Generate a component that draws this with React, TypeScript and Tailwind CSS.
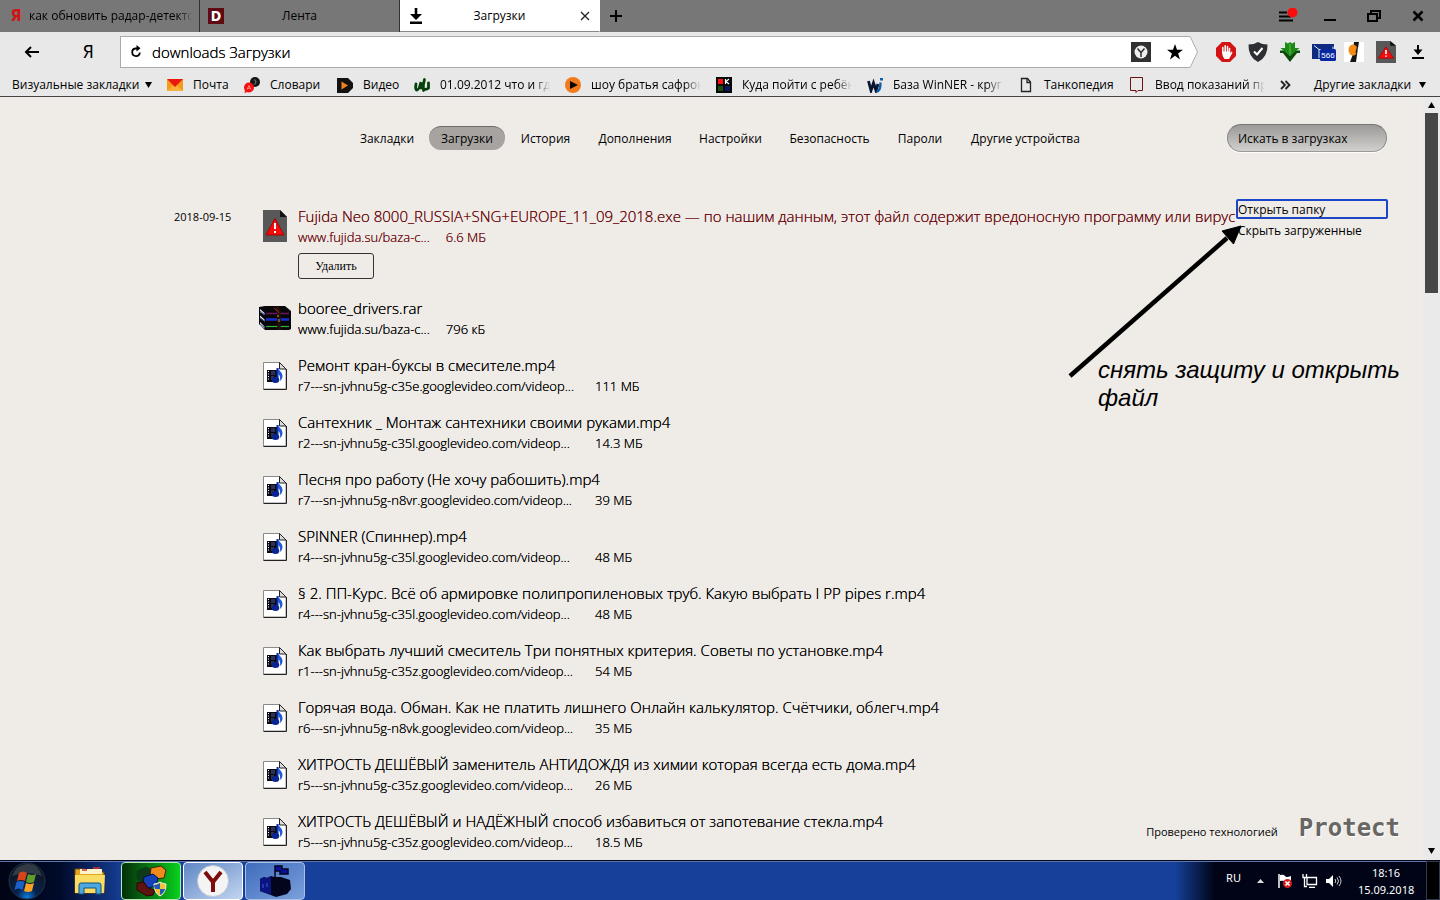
import type { ReactNode } from 'react'

interface Download {
  title: string
  source: string
  size: string
}

const videos: Download[] = [
  { title: 'Ремонт кран-буксы в смесителе.mp4', source: 'r7---sn-jvhnu5g-c35e.googlevideo.com/videop...', size: '111 МБ' },
  { title: 'Сантехник _ Монтаж сантехники своими руками.mp4', source: 'r2---sn-jvhnu5g-c35l.googlevideo.com/videop...', size: '14.3 МБ' },
  { title: 'Песня про работу (Не хочу рабошить).mp4', source: 'r7---sn-jvhnu5g-n8vr.googlevideo.com/videop...', size: '39 МБ' },
  { title: 'SPINNER (Спиннер).mp4', source: 'r4---sn-jvhnu5g-c35l.googlevideo.com/videop...', size: '48 МБ' },
  { title: '§ 2. ПП-Курс. Всё об армировке полипропиленовых труб. Какую выбрать I PP pipes r.mp4', source: 'r4---sn-jvhnu5g-c35l.googlevideo.com/videop...', size: '48 МБ' },
  { title: 'Как выбрать лучший смеситель Три понятных критерия. Советы по установке.mp4', source: 'r1---sn-jvhnu5g-c35z.googlevideo.com/videop...', size: '54 МБ' },
  { title: 'Горячая вода. Обман. Как не платить лишнего Онлайн калькулятор. Счётчики, облегч.mp4', source: 'r6---sn-jvhnu5g-n8vk.googlevideo.com/videop...', size: '35 МБ' },
  { title: 'ХИТРОСТЬ ДЕШЁВЫЙ заменитель АНТИДОЖДЯ из химии которая всегда есть дома.mp4', source: 'r5---sn-jvhnu5g-c35z.googlevideo.com/videop...', size: '26 МБ' },
  { title: 'ХИТРОСТЬ ДЕШЁВЫЙ и НАДЁЖНЫЙ способ избавиться от запотевание стекла.mp4', source: 'r5---sn-jvhnu5g-c35z.googlevideo.com/videop...', size: '18.5 МБ' },
]

const sections = [
  { label: 'Закладки', width: 'w-[78px]' },
  { label: 'Загрузки', width: 'w-[76px]' },
  { label: 'История', width: 'w-[75px]' },
  { label: 'Дополнения', width: 'w-[98px]' },
  { label: 'Настройки', width: 'w-[87px]' },
  { label: 'Безопасность', width: 'w-[105px]' },
  { label: 'Пароли', width: 'w-[70px]' },
  { label: 'Другие устройства', width: 'w-[135px]' },
]

/* ---------- icons ---------- */

function WarningFile({ className }: { className: string }) {
  return (
    <svg viewBox="0 0 24 32" preserveAspectRatio="none" className={className}>
      <path d="M0 0h17l7 7v25H0z" fill="#585858" />
      <path d="M17 0l7 7h-7z" fill="#111" />
      <path d="M12 8.500l9 16.500H3z" fill="#f30c0c" stroke="#a00" strokeLinejoin="round" />
      <path d="M11 13h2v6h-2zM11 21h2v2h-2z" fill="#fff" />
    </svg>
  )
}

function VideoFile() {
  return (
    <svg viewBox="0 0 24 28" className="mt-0.5 h-7 w-6">
      <path d="M.5.500h16l6.500 6.500v20H.5z" fill="#fff" stroke="#8a8a8a" />
      <path d="M.5 27.500h23V7" fill="none" stroke="#222" />
      <path d="M16.500.500V7H23z" fill="#ddd" stroke="#222" />
      <rect x="4" y="8" width="11" height="12" fill="#0a0a12" />
      <path d="M5.500 9v10" stroke="#fff" strokeDasharray="1 1.500" />
      <path d="M8 10h4M8 12h4M8 15h3M8 17h3" stroke="#39406e" strokeWidth="1.500" />
      <path d="M14.500 6v12" stroke="#0b2fa8" strokeWidth="2" />
      <path d="M15 6c1 3 4.500 4 4.500 8 0 2-1 4-2.500 5 .5-3 0-6-2-7z" fill="#2358d8" />
      <ellipse cx="12.500" cy="18" rx="3.800" ry="3" fill="#0b2590" />
    </svg>
  )
}

function Archive() {
  return (
    <svg viewBox="0 0 32 26" className="h-[26px] w-8">
      <path d="M0 2l6-1h20l6 5v18l-2 1H6L0 19z" fill="#080608" />
      <path d="M1 4l4.500 4v2L1 7zM1 10.500l4.500 4v2L1 13zM1 17l4.500 4.500v2L1 20z" fill="#eef4fb" />
      <path d="M1 6l5 4M1 12.500l5 4M1 19l5 4" stroke="#2a4a90" />
      <path d="M7 8.500h23" stroke="#6c1460" strokeWidth="1.500" />
      <path d="M7 14.500h23" stroke="#1430d0" strokeWidth="2.500" />
      <path d="M7 21.500h23" stroke="#27b53c" strokeWidth="1.200" />
      <path d="M17 2l3 4v19" fill="none" stroke="#241008" strokeWidth="3.500" />
      <path d="M19 10v2M20 14v3" fill="none" stroke="#c9a23a" />
      <path d="M15 3l3 3M18 5l2 3" stroke="#a02418" />
    </svg>
  )
}

function MailIcon() {
  return (
    <svg viewBox="0 0 16 16" className="size-4">
      <path d="M0 2h16v12H0z" fill="#f79a1c" />
      <path d="M0 14l8-7 8 7z" fill="#fbb03b" />
      <path d="M0 2h16l-8 8z" fill="#e8190c" />
    </svg>
  )
}

function DictIcon() {
  return (
    <svg viewBox="0 0 16 16" className="size-4">
      <circle cx="11" cy="5" r="5" fill="#151515" />
      <path d="M9.500 3h2v4h-2M11.500 5h1.500" fill="none" stroke="#777" strokeWidth=".8" />
      <circle cx="5" cy="10.500" r="5" fill="#f4100f" />
      <path d="M1 13l-.5 3 3-1z" fill="#f4100f" />
      <path d="M3 12.500L5 8.500l2 4M3.700 11.300h2.600" fill="none" stroke="#ff9c9c" strokeWidth=".8" />
    </svg>
  )
}

function VideoIcon() {
  return (
    <svg viewBox="0 0 16 16" className="size-4">
      <path d="M0 1h11l5 5v5l-5 5H0z" fill="#121212" />
      <path d="M4.500 4.500l6.500 4-6.500 4z" fill="#f5811f" />
    </svg>
  )
}

function LeafIcon() {
  return (
    <svg viewBox="0 0 16 16" className="size-4">
      <path
        d="M2 7q-1 6 1 6t4-8q-1 5 0 6M10.500 2.500q-2 6-1 11M14.500 6v5q-2 2-5 1"
        fill="none"
        stroke="#06400b"
        strokeWidth="2.800"
        strokeLinecap="round"
      />
    </svg>
  )
}

function PlayIcon() {
  return (
    <svg viewBox="0 0 16 16" className="size-4">
      <circle cx="8" cy="8" r="8" fill="#f37a1b" />
      <path d="M5 4l8 4-8 4z" fill="#080808" />
    </svg>
  )
}

function KidsIcon() {
  return (
    <svg viewBox="0 0 16 16" className="size-4">
      <path d="M0 0h16v16H0z" fill="#080808" />
      <path d="M2 2h5v5H2z" fill="#f11" />
      <path d="M2 9h5v5H2z" fill="#145214" />
      <path d="M9 9h5v5H9z" fill="#0b1560" />
      <path d="M9.500 2v5M13 2l-3 2.500L13 7" fill="none" stroke="#fff" strokeWidth="1.200" />
    </svg>
  )
}

function WinnerIcon() {
  return (
    <svg viewBox="0 0 16 16" className="size-4">
      <path d="M1.500 4l2.500 9.500L6.500 6 9 13.500 11 7" fill="none" stroke="#08152f" strokeWidth="2.800" />
      <path d="M9.500 14.500q4 0 4-9" fill="none" stroke="#0d5fa8" strokeWidth="2.400" />
      <path d="M13 1h3v2.500h-3z" fill="#0d5fa8" />
    </svg>
  )
}

function PageIcon() {
  return (
    <svg viewBox="0 0 16 16" className="size-4">
      <path d="M3.500 1.500h6l3 3.500v9.500h-9z" fill="none" stroke="#222" strokeWidth="1.300" />
      <path d="M9 1.500V5.500h3.500" fill="none" stroke="#222" strokeWidth="1.300" />
    </svg>
  )
}

function BalloonIcon() {
  return (
    <svg viewBox="0 0 16 16" className="size-4">
      <path d="M1.500.500h12v13H9l-2 2v-2H1.500z" fill="none" stroke="#6d1212" />
    </svg>
  )
}

function Caret({ className = 'fill-black' }: { className?: string }) {
  return (
    <svg viewBox="0 0 7 6" className={`h-1.5 w-[7px] shrink-0 ${className}`}>
      <path d="M0 0h7L3.500 6z" />
    </svg>
  )
}

/* ---------- browser chrome ---------- */

function Tab({ icon, title, long, active }: { icon: ReactNode; title: string; long?: boolean; active?: boolean }) {
  return (
    <div
      className={`flex w-[200px] items-center border-r pl-2 ${
        active ? 'border-white border-b border-b-[#888] bg-white' : 'border-r-[#333]'
      } ${long ? 'pr-1.5' : 'pr-1'}`}
    >
      <span className={long ? 'w-[21px] shrink-0' : 'w-4 shrink-0'}>{icon}</span>
      <button
        type="button"
        className={`flex-1 overflow-hidden whitespace-nowrap ${
          long ? 'text-left [mask-image:linear-gradient(to_right,#000_90%,transparent)]' : 'text-center'
        }`}
      >
        {title}
      </button>
      {!long && (
        <button type="button" aria-label="Закрыть вкладку" className="flex w-5 justify-center">
          {active && (
            <svg viewBox="0 0 10 10" className="size-2.5">
              <path d="M1 1l8 8M9 1L1 9" stroke="#222" strokeWidth="1.300" />
            </svg>
          )}
        </button>
      )}
    </div>
  )
}

function TabBar() {
  return (
    <div className="flex h-8 bg-[#777]">
      <Tab
        long
        title="как обновить радар-детектор"
        icon={
          <span className="block w-4 text-center font-['DejaVu_Sans_Condensed','DejaVu_Sans'] text-base leading-5 font-bold text-[#d11313]">
            Я
          </span>
        }
      />
      <Tab
        title="Лента"
        icon={
          <span className="block size-4 bg-[#5f0a12] text-center font-['DejaVu_Sans_Condensed','DejaVu_Sans'] text-sm leading-4 font-bold text-white">
            D
          </span>
        }
      />
      <Tab
        active
        title="Загрузки"
        icon={
          <svg viewBox="0 0 16 16" className="size-4">
            <path d="M6.700 0h2.600v6H14l-6 6-6-6h4.700zM2 13.500h12V16H2z" />
          </svg>
        }
      />
      <button type="button" aria-label="Новая вкладка" className="flex w-8 items-center justify-center">
        <svg viewBox="0 0 12 12" className="size-3">
          <path d="M6 0v12M0 6h12" stroke="#000" strokeWidth="2" />
        </svg>
      </button>
      <div className="ml-auto flex">
        <button type="button" aria-label="Меню" className="flex w-11 items-center justify-center">
          <svg viewBox="0 0 20 16" className="ml-1 h-4 w-5">
            <path d="M1 4.500h8M1 8.500h12M1 12.500h14" stroke="#000" strokeWidth="1.800" />
            <circle cx="14.500" cy="4.500" r="5" fill="#fb0d0d" />
          </svg>
        </button>
        <button type="button" aria-label="Свернуть" className="flex w-11 items-center justify-center">
          <svg viewBox="0 0 12 12" className="size-3">
            <path d="M0 10h12" stroke="#000" strokeWidth="2" />
          </svg>
        </button>
        <button type="button" aria-label="Развернуть" className="flex w-11 items-center justify-center">
          <svg viewBox="0 0 14 12" className="h-3 w-3.5">
            <path d="M1 4h9v7H1zM4 4V1h9v7h-3" fill="none" stroke="#000" strokeWidth="2" />
          </svg>
        </button>
        <button type="button" aria-label="Закрыть" className="flex w-11 items-center justify-center">
          <svg viewBox="0 0 12 12" className="size-3">
            <path d="M1.500 1.500l9 9M10.500 1.500l-9 9" stroke="#000" strokeWidth="2.500" />
          </svg>
        </button>
      </div>
    </div>
  )
}

function ExtButton({ label, children }: { label: string; children: ReactNode }) {
  return (
    <button type="button" aria-label={label} className="flex w-8 items-center justify-center">
      {children}
    </button>
  )
}

function Toolbar() {
  return (
    <div className="flex h-10 items-stretch pr-1.5">
      <button type="button" aria-label="Назад" className="flex w-16 items-center justify-center">
        <svg viewBox="0 0 16 12" className="h-3 w-4">
          <path d="M15 6H2M7 1L2 6l5 5" fill="none" stroke="#000" strokeWidth="2" />
        </svg>
      </button>
      <button type="button" className="w-14 pr-2 text-center font-['DejaVu_Sans_Condensed','DejaVu_Sans'] text-lg">
        Я
      </button>
      <div className="my-1 flex flex-1 items-center border-y border-l border-[#aaa] bg-white pl-2">
        <button type="button" aria-label="Обновить">
          <svg viewBox="0 0 14 14" className="size-3.5">
            <path d="M8 3.500H6.500a3.800 3.800 0 1 0 4.300 4" fill="none" stroke="#000" strokeWidth="1.800" />
            <path d="M7.500 0l4 3.200-4 3.300z" />
          </svg>
        </button>
        <input
          aria-label="Адрес"
          defaultValue="downloads Загрузки"
          className="ml-[9px] min-w-0 flex-1 text-[15px] leading-5 font-light outline-none [text-shadow:0_0_0_currentColor]"
        />
        <button type="button" aria-label="Yandex" className="flex size-5 items-center justify-center bg-[#303030]">
          <svg viewBox="0 0 14 14" className="size-3.5">
            <circle cx="7" cy="7" r="6.500" fill="#eee" />
            <path d="M3.500 3.500L7 7.500l3.500-4M7 7v5" fill="none" stroke="#303030" strokeWidth="1.500" />
          </svg>
        </button>
        <button type="button" aria-label="В закладки" className="mr-1.5 ml-4">
          <svg viewBox="0 0 16 16" className="size-4">
            <path d="M8 0l2 5.800h6l-4.900 3.600 1.900 6L8 11.800l-5 3.600 1.900-6L0 5.800h6z" />
          </svg>
        </button>
      </div>
      <svg viewBox="0 0 9 32" className="mr-3 h-8 w-[9px] self-center">
        <path d="M0 0h1.500L8.500 16 1.500 32H0z" fill="#fff" />
        <path d="M0 .5h1.200L8.500 16 1.200 31.500H0" fill="none" stroke="#aaa" />
      </svg>
      <ExtButton label="Adblock">
        <svg viewBox="0 0 20 20" className="size-5">
          <path d="M6 0h8l6 6v8l-6 6H6l-6-6V6z" fill="#d31414" />
          <path
            d="M6.800 11V5.500M9.200 10V3.800M11.500 10V4.500M13.500 11V6.500"
            fill="none"
            stroke="#fff"
            strokeWidth="1.500"
            strokeLinecap="round"
          />
          <path d="M6 9.500h8.200v2l1.300-2q1.300 0 .8 1.500L13 17H8.500Q6 14 6 9.500z" fill="#fff" />
        </svg>
      </ExtButton>
      <ExtButton label="Защита">
        <svg viewBox="0 0 20 20" className="size-5">
          <path d="M10 0q4 2.500 9.500 2.500Q20 15 10 20 0 15 .5 2.500 6 2.500 10 0z" fill="#2d2f33" />
          <path d="M6 9.500l3 3L14.500 6" fill="none" stroke="#fff" strokeWidth="2" />
        </svg>
      </ExtButton>
      <ExtButton label="Скачать">
        <svg viewBox="0 0 20 20" className="size-5">
          <path d="M5 0l3 1.500L10 0l2 1.500L15 0v6h4.500L10 14 .5 6H5z" fill="#1c8a16" />
          <path d="M0 8.500h4L10 14l6-5.500h4v2.500h-3L10 20l-7-9H0z" fill="#0b4a08" />
          <path d="M10 2v10" stroke="#3fa82e" strokeWidth="2" />
        </svg>
      </ExtButton>
      <ExtButton label="Письма: 566">
        <svg viewBox="0 0 24 18" className="ml-1 h-[18px] w-6 shrink-0">
          <path d="M0 1h22v5H9v10H0z" fill="#0b2a80" />
          <path d="M2 2.500l5 4V15M7 6.500h14V3.500" fill="none" stroke="#dfe8ff" />
          <rect x="8" y="6" width="16" height="12" rx="1.500" fill="#0727a0" />
          <text x="16" y="15" textAnchor="middle" fill="#fff" fontSize="8" fontFamily="Liberation Sans, sans-serif">
            566
          </text>
        </svg>
      </ExtButton>
      <ExtButton label="Перевод">
        <svg viewBox="0 0 20 20" className="size-5">
          <path d="M0 0h20v20H0z" fill="#fff" />
          <path d="M10 0h5l-1 6-2 14H6l3-8z" fill="#151515" />
          <ellipse cx="9" cy="8" rx="4.500" ry="5.500" fill="#f58a17" />
          <path d="M13.500 3l-.8 10-1.200-3z" fill="#151515" />
        </svg>
      </ExtButton>
      <ExtButton label="Опасный файл">
        <WarningFile className="h-[22px] w-5" />
      </ExtButton>
      <ExtButton label="Загрузки">
        <svg viewBox="0 0 12 14" className="h-3.5 w-3">
          <path d="M6 0v6" stroke="#000" strokeWidth="2" />
          <path d="M1.500 4.500h9L6 10zM0 12h12v2H0z" />
        </svg>
      </ExtButton>
    </div>
  )
}

function Bookmark({ icon, width, fade, children }: { icon: ReactNode; width: string; fade?: boolean; children: string }) {
  return (
    <a href="#" className="flex shrink-0 items-center gap-2.5">
      {icon}
      <span
        className={`whitespace-nowrap ${width} ${
          fade ? 'overflow-hidden [mask-image:linear-gradient(to_right,#000_85%,transparent)]' : ''
        }`}
      >
        {children}
      </span>
    </a>
  )
}

function BookmarksBar() {
  return (
    <div className="flex h-[25px] items-center gap-[15px] overflow-hidden border-b border-[#444] pt-px pr-3.5 pl-3">
      <button type="button" className="flex w-[140px] shrink-0 items-center justify-between whitespace-nowrap">
        Визуальные закладки <Caret />
      </button>
      <Bookmark icon={<MailIcon />} width="w-9">Почта</Bookmark>
      <Bookmark icon={<DictIcon />} width="w-[52px]">Словари</Bookmark>
      <Bookmark icon={<VideoIcon />} width="w-9">Видео</Bookmark>
      <Bookmark icon={<LeafIcon />} width="w-[110px]" fade>01.09.2012 что и где</Bookmark>
      <Bookmark icon={<PlayIcon />} width="w-[110px]" fade>шоу братья сафроновы</Bookmark>
      <Bookmark icon={<KidsIcon />} width="w-[110px]" fade>Куда пойти с ребёнком</Bookmark>
      <Bookmark icon={<WinnerIcon />} width="w-[110px]" fade>База WinNER - круг</Bookmark>
      <Bookmark icon={<PageIcon />} width="w-[70px]">Танкопедия</Bookmark>
      <Bookmark icon={<BalloonIcon />} width="w-[110px]" fade>Ввод показаний при</Bookmark>
      <button type="button" aria-label="Ещё закладки">
        <svg viewBox="0 0 11 10" className="h-2.5 w-[11px]">
          <path d="M1 1l4 4-4 4M5.500 1l4 4-4 4" fill="none" stroke="#222" strokeWidth="1.800" />
        </svg>
      </button>
      <button type="button" className="ml-auto flex w-[112px] shrink-0 items-center justify-between whitespace-nowrap">
        Другие закладки <Caret />
      </button>
    </div>
  )
}

/* ---------- downloads page ---------- */

interface DownloadRowProps {
  item: Download
  icon: ReactNode
  danger?: boolean
  sourceWidth?: string
  children?: ReactNode
}

function DownloadRow({ item, icon, danger, sourceWidth = '', children }: DownloadRowProps) {
  return (
    <li className="flex gap-[7px] pb-[17px] whitespace-nowrap">
      <span className="mt-[3px] flex h-8 w-8 shrink-0 items-center justify-center">{icon}</span>
      <div className={`[text-shadow:0_0_0_currentColor] ${danger ? 'text-[#6d0c10]' : ''}`}>
        <a href="#" className="block h-5 text-[15px] leading-[18px] font-light">{item.title}</a>
        <p className="flex h-5 gap-4 text-[13px] leading-5 font-light">
          <a href="#" className={sourceWidth}>{item.source}</a>
          <span>{item.size}</span>
        </p>
        {children}
      </div>
    </li>
  )
}

function DownloadsPage() {
  return (
    <div className="relative flex min-h-0 flex-1 bg-[#efece8]">
      <main className="flex min-w-0 flex-1 flex-col overflow-hidden">
        <header className="flex items-center pt-[27px] pr-9 pl-[348px]">
          <nav className="flex gap-[3px]">
            {sections.map(({ label, width }) => (
              <a
                key={label}
                href="#"
                className={`h-6 rounded-full border-t text-center leading-6 whitespace-nowrap ${width} ${
                  label === 'Загрузки' ? 'border-[#6d6b69] bg-[#a6a3a0]' : 'border-transparent'
                }`}
              >
                {label}
              </a>
            ))}
          </nav>
          <input
            type="search"
            aria-label="Искать в загрузках"
            placeholder="Искать в загрузках"
            className="ml-auto h-7 w-40 rounded-full border border-t-[#777] border-r-[#888] border-b-[#999] border-l-[#888] bg-linear-to-b from-[#9c9a98] to-[#d2d0cd] px-2.5 shadow-[0_1px_0_#fff] placeholder:text-black"
          />
        </header>
        <section className="mt-[55px] flex pr-[35px] pl-[174px]">
          <time className="w-[85px] shrink-0 text-[11px] leading-5">2018-09-15</time>
          <ul className="min-w-0 flex-1">
            <DownloadRow
              danger
              icon={<WarningFile className="h-8 w-6" />}
              item={{
                title: 'Fujida Neo 8000_RUSSIA+SNG+EUROPE_11_09_2018.exe — по нашим данным, этот файл содержит вредоносную программу или вирус',
                source: 'www.fujida.su/baza-c...',
                size: '6.6 МБ',
              }}
            >
              <button
                type="button"
                className="mt-1.5 mb-[3px] block h-[26px] w-[76px] rounded-[3px] border border-[#333] font-['Liberation_Serif',serif] text-xs text-black"
              >
                Удалить
              </button>
            </DownloadRow>
            <DownloadRow
              icon={<Archive />}
              item={{ title: 'booree_drivers.rar', source: 'www.fujida.su/baza-c...', size: '796 кБ' }}
            />
            {videos.map((video) => (
              <DownloadRow key={video.title} item={video} icon={<VideoFile />} sourceWidth="w-[281px]" />
            ))}
          </ul>
          <div className="-mt-2 flex w-[152px] shrink-0 flex-col gap-1">
            <a href="#" className="h-5 rounded-xs border-2 border-[#1d45c8] leading-[18px]">Открыть папку</a>
            <a href="#" className="pl-0.5 leading-4">Скрыть загруженные</a>
          </div>
        </section>
      </main>

      <div className="flex w-[17px] flex-col items-center bg-[#eaeaea]">
        <Caret className="my-[5px] rotate-180" />
        <div className="h-[180px] w-[13px] bg-[#474747]" />
        <Caret className="mt-auto mb-1.5" />
      </div>

      {/* note drawn over the page */}
      <div className="absolute top-[129px] right-10 w-[331px] font-['Liberation_Sans',sans-serif]">
        <svg viewBox="0 0 175 155" className="h-[155px] w-[175px] overflow-visible">
          <path d="M1 150L158 12" stroke="#000" strokeWidth="4.500" />
          <path d="M172 0l-19 5 11.500 13z" stroke="#000" />
        </svg>
        <p className="-mt-[25px] ml-[29px] text-2xl leading-7 italic">
          снять защиту и открыть
          <br />
          файл
        </p>
      </div>

      <div className="absolute right-10 bottom-4 flex items-center gap-[21px]">
        <span className="pt-2 text-[11px]">Проверено технологией</span>
        <span className="font-['DejaVu_Sans_Mono',monospace] text-2xl leading-8 font-bold text-[#686763] [text-shadow:1px_1px_0_#fff]">
          Protect
        </span>
      </div>
    </div>
  )
}

/* ---------- taskbar ---------- */

function Taskbar() {
  return (
    <footer className="flex h-10 items-stretch border-t border-[#05081c] bg-[linear-gradient(to_right,#000414_0,#000a2a_60px,#16409a_125px,#16409a_calc(100%-265px),#000416_calc(100%-225px),#000416_100%)] font-['Noto_Sans',sans-serif] text-white">
      <div className="flex flex-1 border-t border-[#5c76ad]">
        <button type="button" aria-label="Пуск" className="flex w-[54px] items-center justify-center">
          <svg viewBox="0 0 38 38" className="size-[38px]">
            <defs>
              <radialGradient id="orb" cx=".5" cy=".95" r=".8">
                <stop offset="0" stopColor="#0a7de0" />
                <stop offset=".35" stopColor="#06224d" />
                <stop offset="1" stopColor="#10161f" />
              </radialGradient>
            </defs>
            <circle cx="19" cy="19" r="18" fill="url(#orb)" stroke="#1f3448" />
            <path d="M4 14Q8 3 19 2t15 12Q19 8 4 14z" fill="#8291a0" opacity=".3" />
            <path d="M11 11q4-3 8 0l-2 8q-4-2-8 0z" fill="#d8441a" />
            <path d="M20 12q4 2 8 0l-2 8q-4 2-8 0z" fill="#5f9c2a" />
            <path d="M8.500 20q4-2 8 0l-2 8q-4-3-8 0z" fill="#1c5fc8" />
            <path d="M18 21q4 2 8 0l-2 8q-4 2-8 0z" fill="#f8a021" />
          </svg>
        </button>
        <button type="button" aria-label="Проводник" className="flex w-[67px] items-center justify-center">
          <svg viewBox="0 0 32 30" className="ml-1 h-[30px] w-8">
            <path d="M1 3h10l2 3h17v21H1z" fill="#e3a51f" stroke="#6d4a08" />
            <path d="M6 3h22v5H6z" fill="#fff3c8" />
            <path d="M19 2h7M8 4h5" stroke="#c33" strokeWidth="1.500" />
            <path d="M1 9h30l-1 18H1z" fill="#f8dc63" />
            <path d="M5 28v-9q0-2 2-2h18q2 0 2 2v9h-5v-6H10v6z" fill="#49a9e0" stroke="#12507c" />
          </svg>
        </button>
        <button
          type="button"
          aria-label="Блоки"
          className="mr-0.5 flex w-[60px] items-center justify-center rounded-sm border border-[#b7e8b0] bg-linear-to-r from-[#032f08] to-[#08d21c]"
        >
          <svg viewBox="0 0 32 32" className="size-8">
            <path d="M2 6l9-4 6 3v9l-8 4-7-4z" fill="#0e3a1a" stroke="#041" />
            <path d="M16 3l10-2 5 4-2 8-9 1-5-3z" fill="#f08a1c" stroke="#420" />
            <path d="M9 12l9-3 5 4-2 8-8 2-5-4z" fill="#1440b8" stroke="#015" />
            <path d="M2 18l7-1 4 6 7 2-2 5-6 1-10-6z" fill="#5c1410" stroke="#300" />
            <path d="M25 17q3 2 6 2 0 9-6 12-6-3-6-12 3 0 6-2z" fill="#f2c230" stroke="#eee" />
            <path d="M25 18v6h-5q-1-2-1-4 3 0 6-2zM25 24h5q-1 4-5 6z" fill="#2455b8" />
          </svg>
        </button>
        <button
          type="button"
          aria-label="Yandex"
          className="mr-0.5 flex w-[60px] items-center justify-center rounded-sm border border-white bg-linear-to-br from-[#5f86c4] to-[#c3d6f0]"
        >
          <svg viewBox="0 0 32 32" className="size-8">
            <circle cx="16" cy="16" r="15.500" fill="#f4f4f4" stroke="#c4c9d0" />
            <path d="M8 7l8 10 8-10M16 16v11" fill="none" stroke="#7d0c0c" strokeWidth="4" />
          </svg>
        </button>
        <button
          type="button"
          aria-label="Замок"
          className="flex w-[60px] items-center justify-center rounded-sm border border-[#a9c0e6] bg-linear-to-br from-[#3f6cbc] to-[#7ba0dc]"
        >
          <svg viewBox="0 0 32 32" className="size-8">
            <path d="M1 14l4-2 3 1 4-2 3 1h7l9 3 1 9-4 5-11 3-16-6z" fill="#03051c" />
            <path d="M1 14l4-2 3 1 4-2v19l-5-2-6-2z" fill="#0b1480" />
            <path d="M16 1h7v3h6v5h-8V6h-5zM16 1v12" fill="#0a10a0" stroke="#03051c" strokeWidth="1.500" />
            <path d="M4 19v4M8 18v4" stroke="#3a5fd0" />
          </svg>
        </button>
        <div className="ml-auto flex items-center text-[11px]">
          <span className="mr-4 pb-1.5">RU</span>
          <svg viewBox="0 0 7 4" className="mr-3.5 h-1 w-[7px]">
            <path d="M3.500 0L7 4H0z" fill="#ddd" />
          </svg>
          <svg viewBox="0 0 14 14" className="mr-2.5 size-3.5">
            <path d="M1 0v14" stroke="#fff" strokeWidth="1.500" />
            <path d="M2 1q4-1 5 1t6 0v6q-4 2-6 0T2 7z" fill="#fff" />
            <circle cx="9.500" cy="9.500" r="4.500" fill="#d01f1f" />
            <path d="M7.500 7.500l4 4M11.500 7.500l-4 4" stroke="#fff" strokeWidth="1.500" />
          </svg>
          <svg viewBox="0 0 16 14" className="mr-2 h-3.5 w-4">
            <path d="M5 3.500h9.500v7H5zM7 13.500h6M2.500 4v8.500H5M1 0v3.500h3.500V0" fill="none" stroke="#fff" strokeWidth="1.300" />
          </svg>
          <svg viewBox="0 0 16 14" className="mr-4 h-3.5 w-4">
            <path d="M0 5h3l4-4v12L3 9H0z" fill="#fff" />
            <path d="M9 5q1.500 2 0 4M11 3.500q3 3.500 0 7M13 2q4 5 0 10" fill="none" stroke="#ccc" />
          </svg>
          <div className="mr-3 w-14 text-center leading-[17px]">
            18:16
            <br />
            15.09.2018
          </div>
        </div>
      </div>
      <button type="button" aria-label="Показать рабочий стол" className="w-3.5 border border-[#333a4c] bg-black" />
    </footer>
  )
}

export default function App() {
  return (
    <div className="flex h-screen flex-col overflow-hidden bg-[#e8e8e8] font-['Open_Sans',sans-serif] text-xs text-black">
      <TabBar />
      <Toolbar />
      <BookmarksBar />
      <DownloadsPage />
      <Taskbar />
    </div>
  )
}
